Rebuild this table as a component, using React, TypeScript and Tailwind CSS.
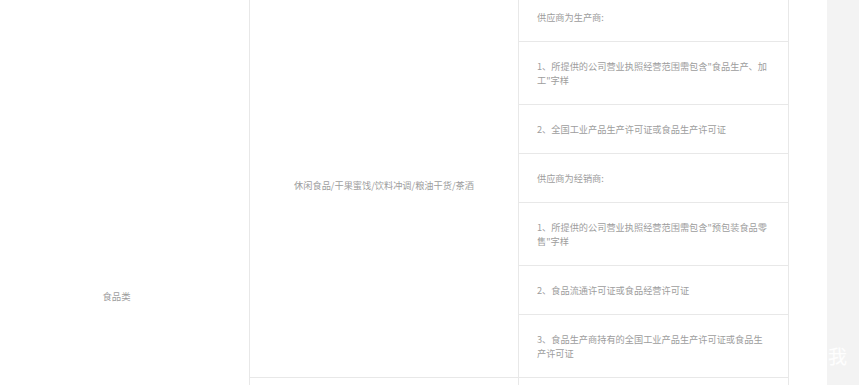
import React from "react";

const rows: string[][] = [
  ["供应商为生产商:"],
  ['1、所提供的公司营业执照经营范围需包含"食品生产、加', '工"字样'],
  ["2、全国工业产品生产许可证或食品生产许可证"],
  ["供应商为经销商:"],
  ['1、所提供的公司营业执照经营范围需包含"预包装食品零', '售"字样'],
  ["2、食品流通许可证或食品经营许可证"],
  ["3、食品生产商持有的全国工业产品生产许可证或食品生", "产许可证"],
];

const App: React.FC = () => {
  return (
    <div
      className="relative flex w-[859px] h-[385px] overflow-hidden bg-white text-[#9d9d9d]"
      style={{ fontFamily: '"Noto Sans CJK SC", "Noto Sans", sans-serif' }}
    >
      <div className="w-[789px] shrink-0 -mt-[7px] flex border-r border-[#e8e8e8]">
        {/* category column */}
        <div className="w-[250px] shrink-0 h-[606px] border-r border-[#e8e8e8] flex items-center justify-center pr-4">
          <span className="text-[9.4px] leading-[14px]">食品类</span>
        </div>

        <div className="flex-1 flex flex-col">
          <div className="flex border-b border-[#e8e8e8]">
            <div className="w-[269px] shrink-0 border-r border-[#e8e8e8] flex items-center justify-center">
              <span className="text-[9.2px] leading-[14px]">休闲食品/干果蜜饯/饮料冲调/粮油干货/茶酒</span>
            </div>
            <div className="flex-1 flex flex-col">
              {rows.map((lines, i) => (
                <div
                  key={i}
                  className={`px-[18px] py-[17px] text-[9.2px] leading-[14px] whitespace-nowrap overflow-hidden ${
                    i < rows.length - 1 ? "border-b border-[#e8e8e8]" : ""
                  }`}
                >
                  {lines.map((l, j) => (
                    <div key={j}>{l}</div>
                  ))}
                </div>
              ))}
            </div>
          </div>
          <div className="flex flex-1">
            <div className="w-[269px] shrink-0 border-r border-[#e8e8e8]"></div>
            <div className="flex-1"></div>
          </div>
        </div>
      </div>

      <div className="w-[38px] shrink-0"></div>
      <div className="flex-1 bg-[#f3f3f3]"></div>

      {/* watermark */}
      <span className="absolute left-[828px] top-[346px] text-[19px] leading-none text-white/90">我</span>
    </div>
  );
};

export default App;
